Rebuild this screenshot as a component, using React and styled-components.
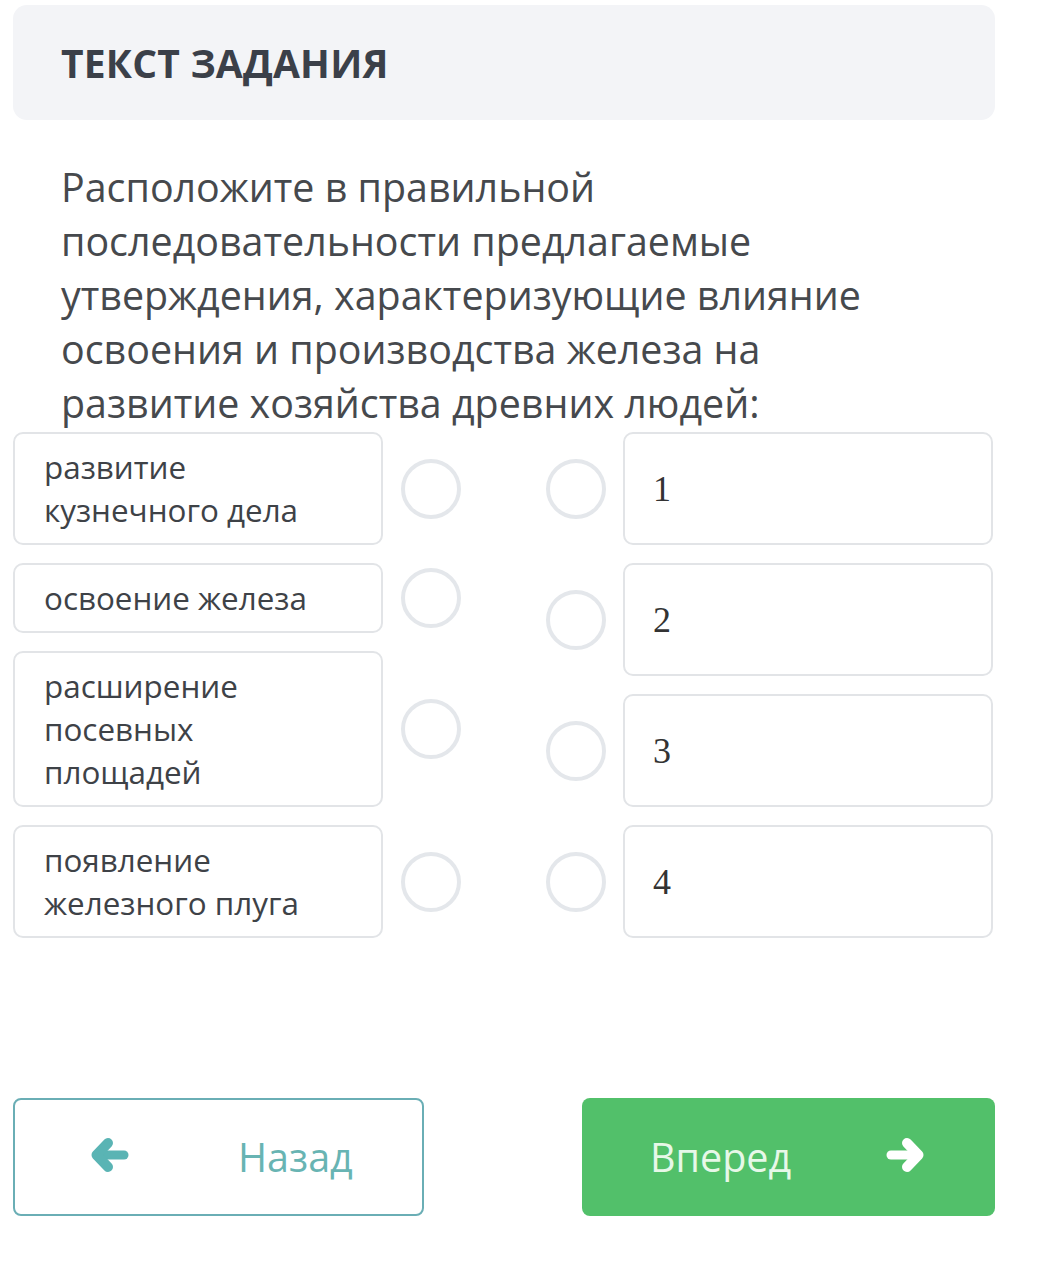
import React from 'react'
import styled, { createGlobalStyle } from 'styled-components'

const GlobalStyle = createGlobalStyle`
  body {
    margin: 0;
    background: #fff;
    font-family: "Open Sans", "Noto Sans", sans-serif;
  }
`

const Page = styled.div`
  width: 1043px;
  padding: 5px 48px 0 13px;
  box-sizing: border-box;
`

const Header = styled.div`
  height: 115px;
  display: flex;
  align-items: center;
  padding-left: 48px;
  background: #f3f4f7;
  border-radius: 14px;
`

const HeaderTitle = styled.h2`
  margin: 0;
  font-size: 39px;
  font-weight: 700;
  color: #3b4049;
  letter-spacing: 0.2px;
`

const Question = styled.p`
  margin: 40px 0 2px;
  padding: 0 60px 0 48px;
  font-size: 39.4px;
  line-height: 54px;
  color: #46494d;
`

const Board = styled.div`
  display: flex;
  justify-content: space-between;
`

const Column = styled.div`
  display: flex;
  flex-direction: column;
  gap: 18px;
  margin-right: ${p => (p.$right ? '2px' : '0')};
`

const Row = styled.div`
  display: flex;
  align-items: center;
  gap: ${p => (p.$tight ? '17px' : '18px')};
`

const Card = styled.div`
  width: 370px;
  box-sizing: border-box;
  border: 2px solid #e2e4e7;
  border-radius: 10px;
  background: #fff;
`

const ItemCard = styled(Card)`
  padding: 11px 16px 12px 29px;
  font-size: 31.4px;
  line-height: 43px;
  color: #3e4247;
`

const ItemText = styled.span`
  white-space: pre-line;
`

const SlotCard = styled(Card)`
  height: 113px;
  display: flex;
  align-items: center;
  padding-left: 28px;
  font-family: "Liberation Serif", "DejaVu Serif", serif;
  font-size: 36px;
  color: #333;
`

const Dot = styled.div`
  width: 60px;
  height: 60px;
  box-sizing: border-box;
  border: 4px solid #e4e7eb;
  border-radius: 50%;
  flex-shrink: 0;
`

const Footer = styled.div`
  display: flex;
  justify-content: space-between;
  margin-top: 160px;
`

const Button = styled.button`
  height: 118px;
  box-sizing: border-box;
  display: flex;
  align-items: center;
  border-radius: 8px;
  font-family: "Open Sans", "Noto Sans", sans-serif;
  font-size: 39.5px;
  cursor: pointer;
`

const BackButton = styled(Button)`
  width: 411px;
  padding: 0 0 0 76px;
  gap: 109px;
  background: #fff;
  border: 2px solid #6aaeb5;
  color: #68b4b3;

  svg {
    color: #5ab4b4;
  }
`

const NextButton = styled(Button)`
  width: 413px;
  padding: 0 0 0 68px;
  gap: 95px;
  background: #52c06a;
  border: none;
  color: #e7f8e8;

  svg {
    color: #fff;
  }
`

const Arrow = ({ dir }) => (
  <svg
    width="38"
    height="36"
    viewBox="0 0 38 36"
    fill="none"
    stroke="currentColor"
    strokeLinecap="round"
    strokeLinejoin="round"
    style={{ marginTop: -4, transform: dir === 'right' ? 'scaleX(-1)' : undefined }}
  >
    <path d="M6 18H33" strokeWidth="9" />
    <path d="M17 6L5.5 18L17 30" strokeWidth="10" />
  </svg>
)

const items = [
  'развитие\nкузнечного дела',
  'освоение железа',
  'расширение\nпосевных\nплощадей',
  'появление\nжелезного плуга',
]

export default function App() {
  return (
    <Page>
      <GlobalStyle />
      <Header>
        <HeaderTitle>ТЕКСТ ЗАДАНИЯ</HeaderTitle>
      </Header>
      <Question>
        Расположите в правильной последовательности предлагаемые утверждения,
        характеризующие влияние освоения и производства железа на развитие
        хозяйства древних людей:
      </Question>
      <Board>
        <Column>
          {items.map(text => (
            <Row key={text}>
              <ItemCard>
                <ItemText>{text}</ItemText>
              </ItemCard>
              <Dot />
            </Row>
          ))}
        </Column>
        <Column $right>
          {[1, 2, 3, 4].map(n => (
            <Row key={n} $tight>
              <Dot />
              <SlotCard>{n}</SlotCard>
            </Row>
          ))}
        </Column>
      </Board>
      <Footer>
        <BackButton>
          <Arrow dir="left" />
          <span>Назад</span>
        </BackButton>
        <NextButton>
          <span>Вперед</span>
          <Arrow dir="right" />
        </NextButton>
      </Footer>
    </Page>
  )
}
